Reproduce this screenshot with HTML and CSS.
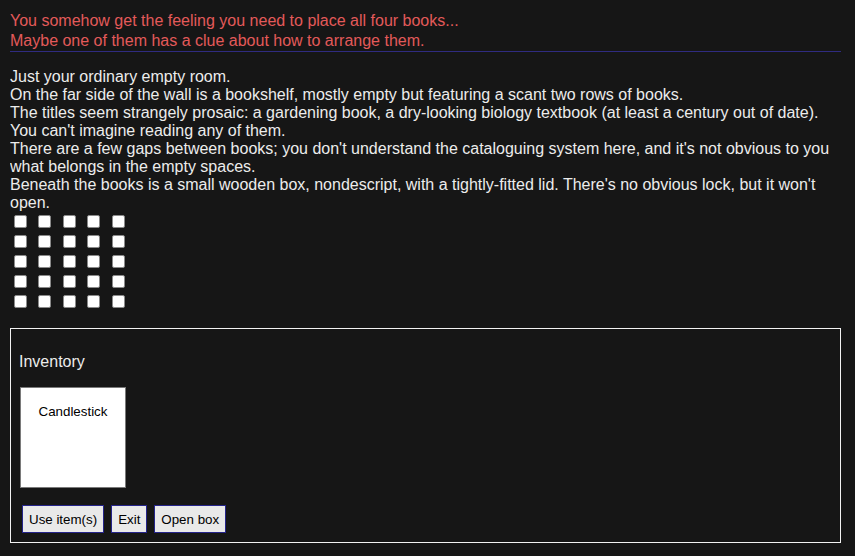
FILE: index.html
```html
<!DOCTYPE html>
<html>
<head>
<meta charset="utf-8">
<link rel="stylesheet" href="styles.css">
</head>
<body>
<div class="messages">
  <div class="msg">You somehow get the feeling you need to place all four books...</div>
  <div class="msg">Maybe one of them has a clue about how to arrange them.</div>
</div>
<div class="divider"></div>
<div class="description">
  <div>Just your ordinary empty room.</div>
  <div>On the far side of the wall is a bookshelf, mostly empty but featuring a scant two rows of books.</div>
  <div>The titles seem strangely prosaic: a gardening book, a dry-looking biology textbook (at least a century out of date). You can't imagine reading any of them.</div>
  <div>There are a few gaps between books; you don't understand the cataloguing system here, and it's not obvious to you what belongs in the empty spaces.</div>
  <div>Beneath the books is a small wooden box, nondescript, with a tightly-fitted lid. There's no obvious lock, but it won't open.</div>
</div>
<div class="grid">
  <div class="row"><input type="checkbox"> <input type="checkbox"> <input type="checkbox"> <input type="checkbox"> <input type="checkbox"></div>
  <div class="row"><input type="checkbox"> <input type="checkbox"> <input type="checkbox"> <input type="checkbox"> <input type="checkbox"></div>
  <div class="row"><input type="checkbox"> <input type="checkbox"> <input type="checkbox"> <input type="checkbox"> <input type="checkbox"></div>
  <div class="row"><input type="checkbox"> <input type="checkbox"> <input type="checkbox"> <input type="checkbox"> <input type="checkbox"></div>
  <div class="row"><input type="checkbox"> <input type="checkbox"> <input type="checkbox"> <input type="checkbox"> <input type="checkbox"></div>
</div>
<div class="inventory">
  <div class="inv-title">Inventory</div>
  <div class="items">
    <div class="item">Candlestick</div>
  </div>
  <div class="actions">
    <button class="btn">Use item(s)</button>
    <button class="btn">Exit</button>
    <button class="btn">Open box</button>
  </div>
</div>
</body>
</html>
```

FILE: styles.css
```css
html {
  background: #161616;
}
body {
  margin: 0 14px 0 10px;
  padding-top: 11px;
  font-family: "Liberation Sans", Arial, sans-serif;
  font-size: 16px;
  line-height: 18px;
  color: #ececec;
}
.messages {
  color: #e35a5a;
}
.msg {
  line-height: 20px;
}
.divider {
  height: 1px;
  background: #2f2b80;
  margin: 0 0 16px 0;
}
.grid {
  padding-bottom: 16px;
}
.row {
  height: 20px;
}
.row input {
  appearance: none;
  -webkit-appearance: none;
  box-sizing: border-box;
  width: 13px;
  height: 13px;
  margin: 3px 3px 4px 4px;
  vertical-align: top;
  background: #ffffff;
  border: 1px solid #8a8a8a;
  border-radius: 2px;
}
.inventory {
  border: 1px solid #f2f2f2;
  padding: 24px 8px 9px 8px;
}
.inv-title {
  margin-bottom: 16px;
}
.items {
  display: flex;
  padding-left: 1px;
}
.item {
  box-sizing: border-box;
  width: 106px;
  height: 101px;
  padding-top: 16px;
  background: #ffffff;
  border: 1px solid #7a7a7a;
  color: #000;
  font-size: 13.33px;
  line-height: 15px;
  text-align: center;
}
.actions {
  display: flex;
  gap: 7px;
  margin-top: 17px;
  padding-left: 3px;
}
.btn {
  font-family: "Liberation Sans", Arial, sans-serif;
  font-size: 13.33px;
  height: 28px;
  padding: 0 6px;
  background: #e9e9e9;
  color: #000;
  border: 1px solid #25248a;
  border-radius: 0;
}
```
